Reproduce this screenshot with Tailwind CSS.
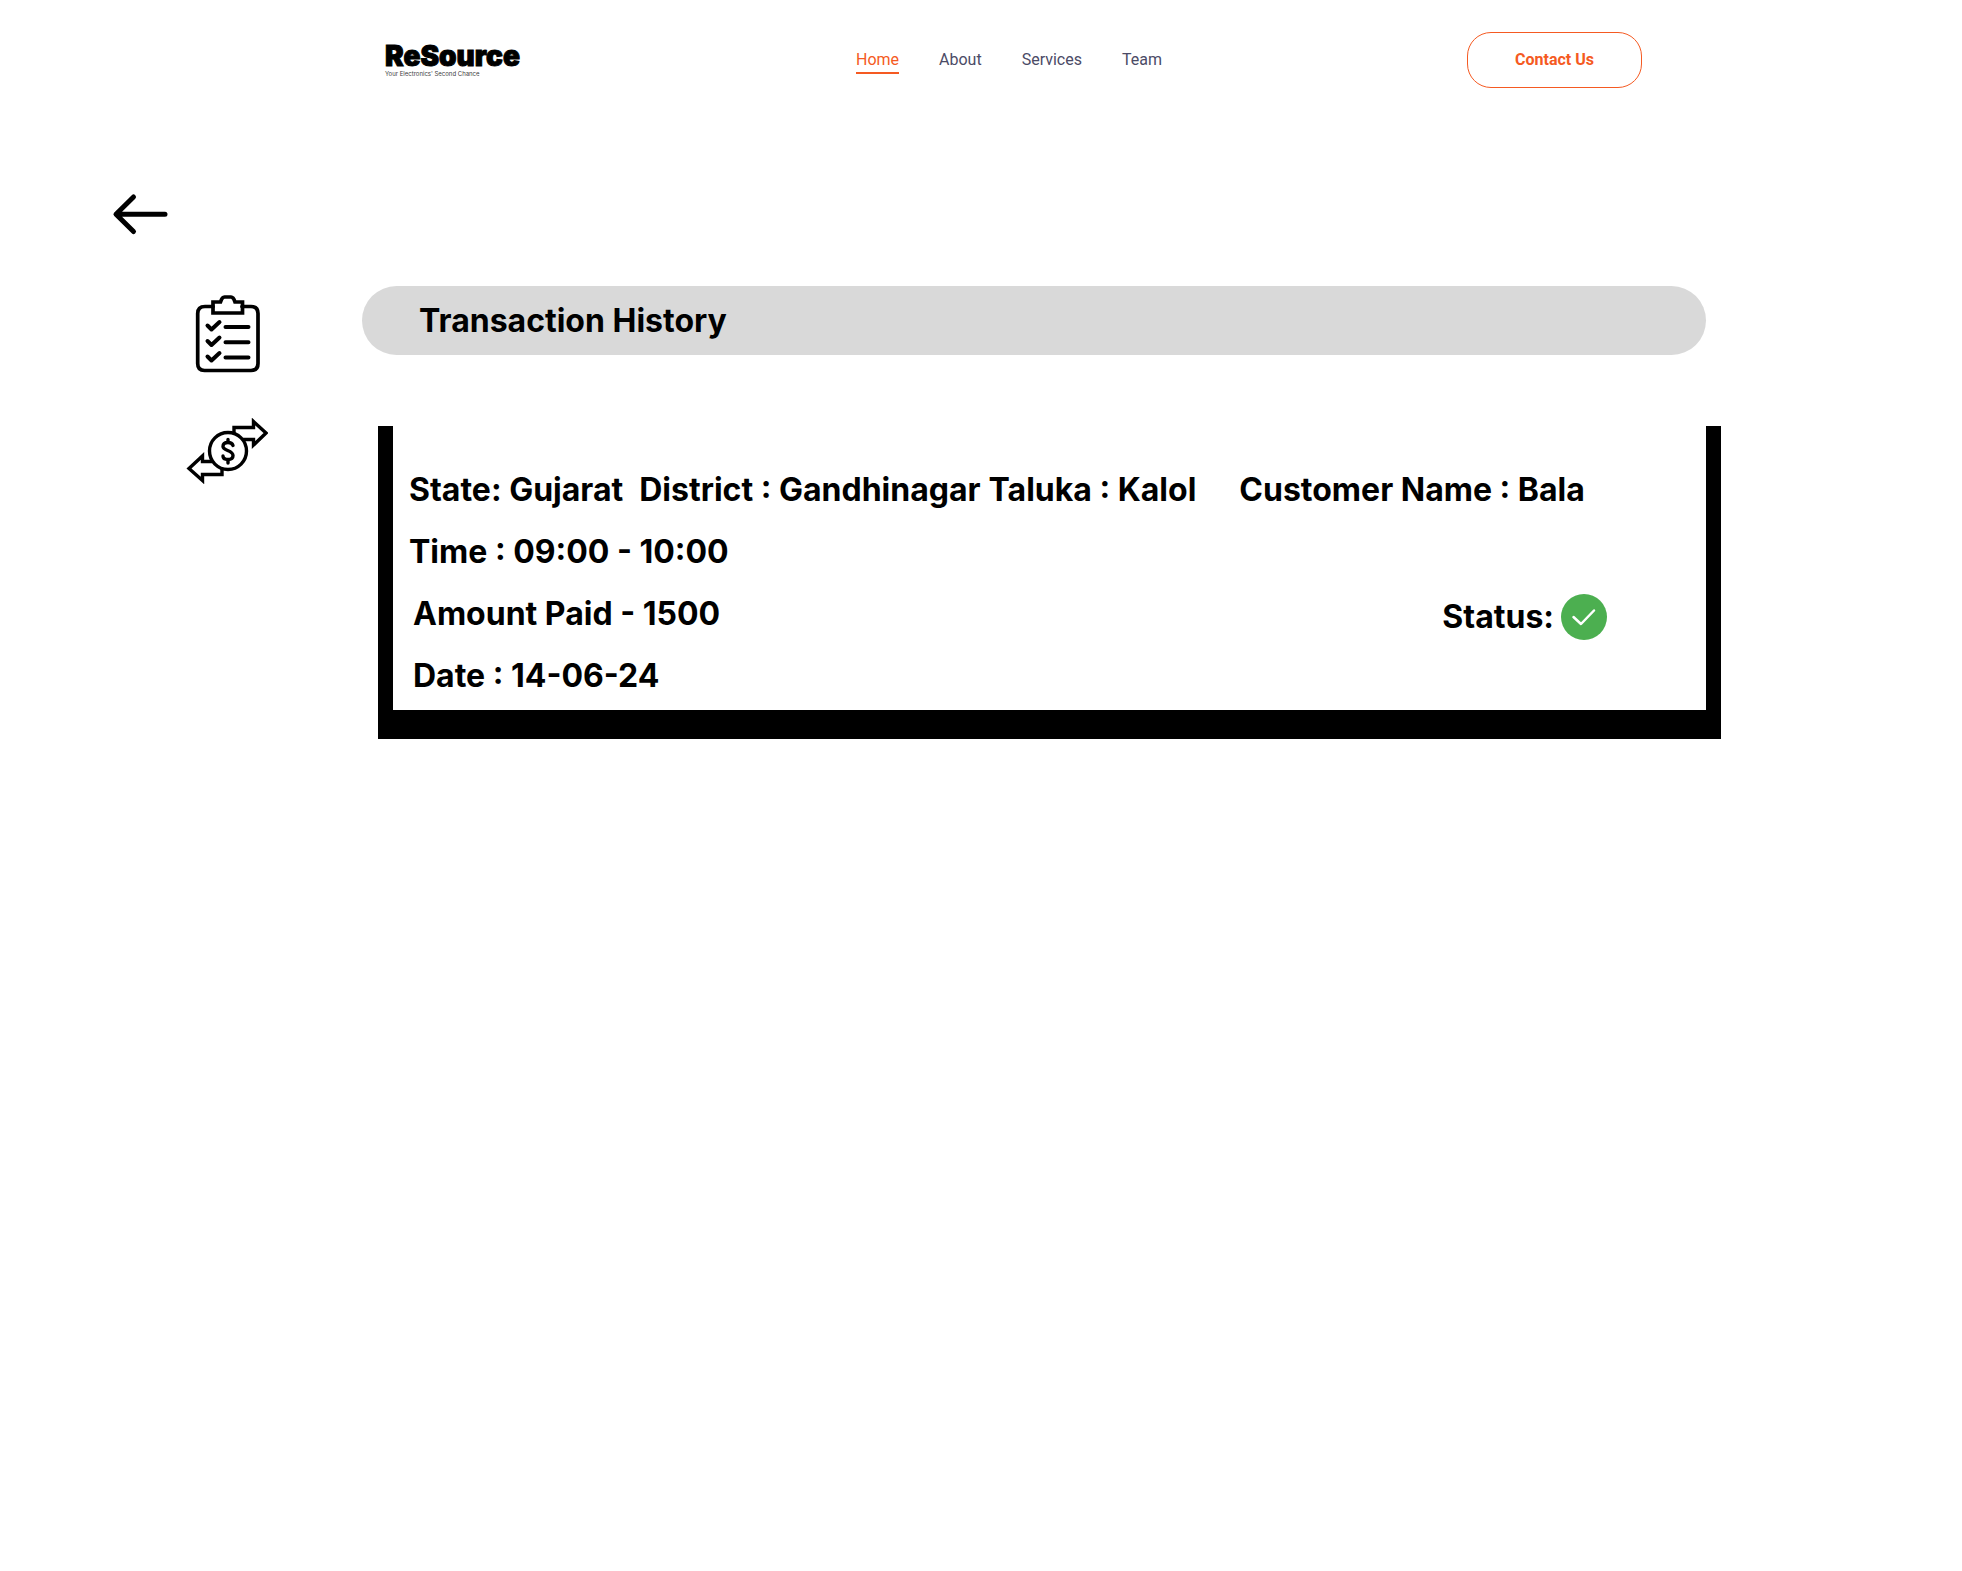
<!DOCTYPE html>
<html lang="en">
<head>
<meta charset="utf-8">
<meta name="viewport" content="width=device-width, initial-scale=1">
<title>ReSource - Transaction History</title>
<script src="https://cdn.jsdelivr.net/npm/@tailwindcss/browser@4"></script>
</head>
<body class="min-h-screen bg-white font-['Inter',sans-serif] text-black">
  <header class="flex flex-wrap items-center justify-between gap-y-4 px-6 pt-8 font-['Roboto',sans-serif] xl:pr-80 xl:pl-[385px]">
    <a href="#" class="block w-[166px] font-['Inter',sans-serif]">
      <span class="block text-[28px] leading-7 font-black [-webkit-text-stroke:1px_#000]">ReSource</span>
      <span class="block text-[6px] leading-2 text-neutral-700">Your Electronics' Second Chance</span>
    </a>
    <nav class="flex gap-10 text-base leading-6 text-[#4b4b66]">
      <a href="#" class="shadow-[0_2px_0_#f55a22] text-[#f55a22]">Home</a>
      <a href="#">About</a>
      <a href="#">Services</a>
      <a href="#">Team</a>
    </nav>
    <button type="button" class="h-14 w-[175px] rounded-3xl border border-[#f55a22] text-base font-bold text-[#f55a22]">Contact Us</button>
  </header>

  <main class="px-6 pt-[104px] xl:pr-[241px] xl:pl-28">
    <button type="button" aria-label="Back" class="block">
      <svg class="h-11 w-14" viewBox="0 0 56 44" fill="none" stroke="#000" stroke-width="5" stroke-linecap="round" stroke-linejoin="round"><path d="M21.500 5 4 22.300 21.500 39.500M4.500 22.300H53"/></svg>
    </button>

    <div class="mt-[50px] flex gap-6 xl:gap-[94px]">
      <aside class="flex w-[156px] shrink-0 flex-col items-end gap-11 pt-2">
        <a href="#" aria-label="Orders" class="mr-1">
          <svg class="h-20 w-[72px]" viewBox="0 0 72 80" fill="none" stroke="#000" stroke-width="3.700" stroke-linecap="round" stroke-linejoin="round">
            <path d="M21 12.500H13Q5.700 12.500 5.700 19.500V69.500Q5.700 76.500 12.500 76.500H59Q66 76.500 66 69.500V19.500Q66 12.500 59 12.500H50"/>
            <path stroke-linejoin="miter" stroke-linecap="butt" d="M21 8H28.500Q30 3 32.500 3H39Q41.500 3 43 8H50.500V19H21Z"/>
            <path stroke-width="4" d="M15.500 31.500 19.500 35.500 27.500 28M15.500 47 19.500 51 27.500 43.500M15.500 62.500 19.500 66.500 27.500 59M33.500 33H56.500M33.500 48.300H56.500M33.500 63.600H56.500"/>
          </svg>
        </a>
        <a href="#" aria-label="Transactions">
          <svg class="h-[66px] w-[82px]" viewBox="0 0 82 66" fill="none" stroke="#000" stroke-width="3.400">
            <path d="M48 15V9.500H67.500V3.500L80 15 67.500 27V21.500H57M36 51V56.500H16.500V62.500L3 50.500 16.500 38V43.500H26"/>
            <circle cx="42" cy="33" r="18.500"/>
            <path stroke-linecap="round" d="M47 27.500Q46 24.500 42 24.500 37 24.500 37 28.500C37 33 47 32 47 37.500Q47 41.500 42 41.500 37 41.500 37 38M42 21.500V24.500M42 41.500V45"/>
          </svg>
        </a>
      </aside>

      <section class="min-w-0 flex-1">
        <h1 class="mr-[15px] flex h-[69px] items-center rounded-full bg-[#d9d9d9] px-[57px] text-[32px] font-bold">Transaction History</h1>

        <article class="mt-[71px] ml-4 border-x-[15px] border-b-[29px] border-black px-4 pt-[33px] pb-[3px] text-[32px] leading-[62px] font-bold">
          <div class="flex flex-wrap">
            <span class="mr-4">State: Gujarat</span>
            <span class="mr-2">District : Gandhinagar</span>
            <span class="mr-[43px]">Taluka : Kalol</span>
            <span>Customer Name : Bala</span>
          </div>
          <p>Time : 09:00 - 10:00</p>
          <div class="flex items-end justify-between pr-[83px] pl-1">
            <span>Amount Paid - 1500</span>
            <span class="flex items-center gap-[7px] pb-[5px] leading-[46px]">Status:
              <svg role="img" aria-label="Completed" class="size-[46px]" viewBox="0 0 46 46" fill="none"><circle cx="23" cy="23" r="23" fill="#4caf50"/><path d="M12.500 23 20 30 33 16.500" stroke="#fff" stroke-width="2.500" stroke-linecap="round" stroke-linejoin="round"/></svg>
            </span>
          </div>
          <p class="pl-1">Date : 14-06-24</p>
        </article>
      </section>
    </div>
  </main>
</body>
</html>
